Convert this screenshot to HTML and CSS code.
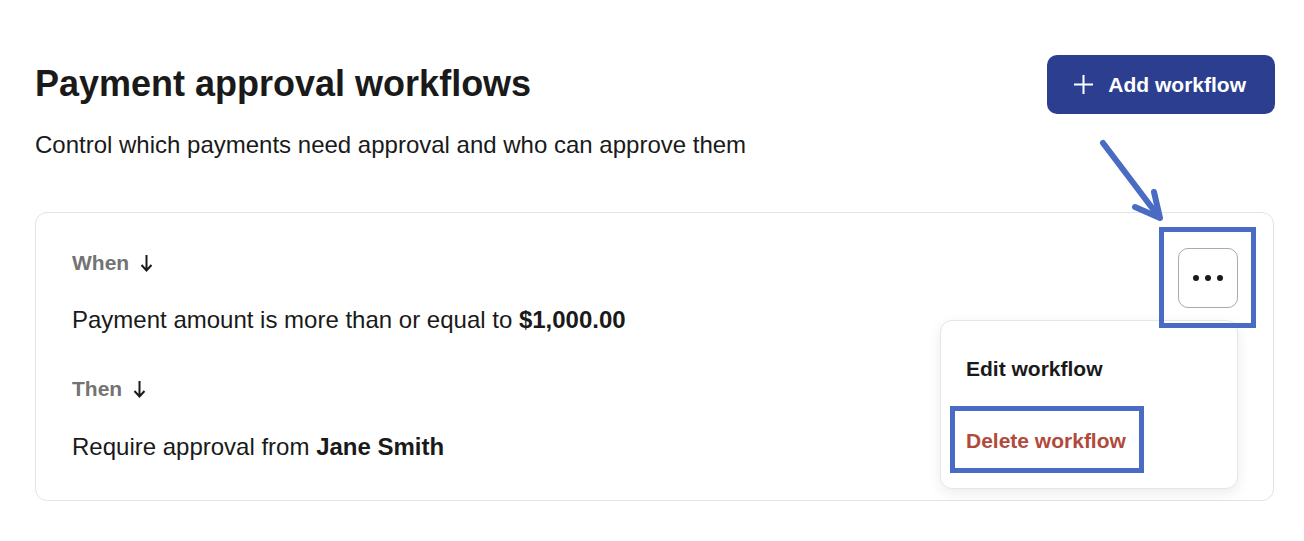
FILE: index.html
```html
<!DOCTYPE html>
<html lang="en">
<head>
    <meta charset="UTF-8">
    <meta name="viewport" content="width=device-width, initial-scale=1.0">
    <title>Payment approval workflows</title>
    <link rel="stylesheet" href="styles.css">
</head>
<body>
    <div class="page">
        <div class="header">
            <div class="header-text">
                <h1>Payment approval workflows</h1>
                <p class="subtitle">Control which payments need approval and who can approve them</p>
            </div>
            <button class="add-btn">
                <svg width="19" height="19" viewBox="0 0 19 19" class="plus">
                    <path d="M9.5 0v19M0 9.5h19" stroke="#fff" stroke-width="2" fill="none"/>
                </svg>
                Add workflow
            </button>
        </div>

        <div class="card">
            <div class="step-label">When
                <svg class="down" width="13" height="18" viewBox="0 0 13 18">
                    <path d="M6.5 1v15M1.5 11l5 5.5 5-5.5" stroke="#1a1a1a" stroke-width="2" fill="none"/>
                </svg>
            </div>
            <div class="step-text">Payment amount is more than or equal to <b>$1,000.00</b></div>
            <div class="step-label then">Then
                <svg class="down" width="13" height="18" viewBox="0 0 13 18">
                    <path d="M6.5 1v15M1.5 11l5 5.5 5-5.5" stroke="#1a1a1a" stroke-width="2" fill="none"/>
                </svg>
            </div>
            <div class="step-text last">Require approval from <b>Jane Smith</b></div>

            <button class="more-btn" aria-label="More">
                <span class="dot"></span><span class="dot"></span><span class="dot"></span>
            </button>

            <div class="menu">
                <div class="menu-item">Edit workflow</div>
                <div class="menu-item danger">Delete workflow</div>
            </div>

            <!-- annotation boxes -->
            <div class="mark mark-more"></div>
            <div class="mark mark-delete"></div>
        </div>

        <svg class="pointer" width="80" height="100" viewBox="0 0 80 100">
            <g stroke="#4a6bc4" stroke-width="6" stroke-linecap="round" stroke-linejoin="round" fill="none">
                <path d="M13 13 L69 87"/>
                <path d="M64 62 L70 88 L45 77"/>
            </g>
        </svg>
    </div>
</body>
</html>
```

FILE: styles.css
```css
body {
    margin: 0;
    font-family: 'Liberation Sans', Arial, sans-serif;
    color: #1a1a1a;
    background: #fff;
}

.page {
    position: relative;
    padding: 55px 30px 0 35px;
}

.header {
    display: flex;
    justify-content: space-between;
    align-items: flex-start;
}

h1 {
    margin: 8px 0 0;
    font-size: 36px;
    line-height: 42px;
    font-weight: bold;
}

.subtitle {
    margin: 26px 0 0;
    font-size: 24px;
    line-height: 28px;
}

.add-btn {
    display: flex;
    align-items: center;
    gap: 15px;
    height: 59px;
    margin-right: -1px;
    padding: 0 29px 0 27px;
    background-color: #2c3e8f;
    color: white;
    border: none;
    border-radius: 10px;
    font-family: inherit;
    font-size: 21px;
    font-weight: bold;
}

.card {
    position: relative;
    margin-top: 53px;
    border: 1px solid #e3e3e3;
    border-radius: 12px;
    padding: 38px 36px 39px;
}

.step-label {
    display: flex;
    align-items: center;
    gap: 11px;
    font-size: 21px;
    font-weight: bold;
    color: #737373;
    line-height: 24px;
}

.step-label.then {
    margin-top: 43px;
}

.step-text {
    margin-top: 31px;
    font-size: 24px;
    line-height: 28px;
}

.step-text.last {
    margin-top: 32px;
}

.more-btn {
    position: absolute;
    top: 35px;
    right: 35px;
    width: 60px;
    height: 60px;
    display: flex;
    align-items: center;
    justify-content: center;
    gap: 6px;
    background: white;
    border: 1px solid #aaaaaa;
    border-radius: 10px;
}

.dot {
    width: 6px;
    height: 6px;
    border-radius: 50%;
    background: #1a1a1a;
}

.menu {
    position: absolute;
    top: 107px;
    right: 35px;
    width: 298px;
    height: 169px;
    border: 1px solid #e6e6e6;
    border-radius: 12px;
    background: white;
    box-shadow: 0 4px 14px rgba(0, 0, 0, 0.08);
    padding-top: 36px;
    box-sizing: border-box;
}

.menu-item {
    padding: 0 25px;
    font-size: 21px;
    font-weight: bold;
    line-height: 24px;
}

.menu-item.danger {
    margin-top: 48px;
    color: #b04a3c;
}

.mark {
    position: absolute;
    border: 5px solid #4a6bc4;
}

.mark-more {
    top: 14px;
    right: 17px;
    width: 87px;
    height: 91px;
}

.mark-delete {
    top: 193px;
    left: 914px;
    width: 184px;
    height: 57px;
}

.pointer {
    position: absolute;
    left: 1090px;
    top: 130px;
}
```
